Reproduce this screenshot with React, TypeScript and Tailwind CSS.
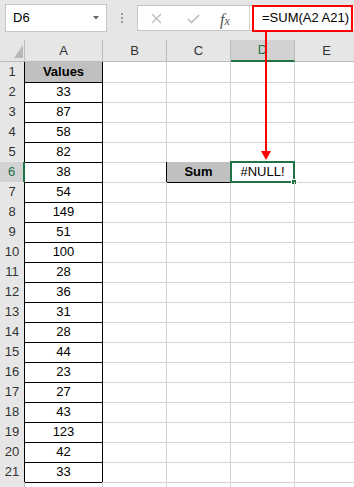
import React from "react";

const values = [33, 87, 58, 82, 38, 54, 149, 51, 100, 28, 36, 31, 28, 44, 23, 27, 43, 123, 42, 33];

const grid = "grid grid-cols-[25px_78px_64px_64px_64px_64px]";
const gl = "border-[#d4d4d4]";

function ColumnHeader({ label, active }: { label: string; active?: boolean }) {
  return (
    <div
      className={
        active
          ? "flex items-center justify-center bg-[#d2d2d2] border-r border-r-[#bcbcbc] border-b-2 border-b-[#217346] text-[#217346]"
          : "flex items-center justify-center border-r border-b border-[#bcbcbc] text-[#333]"
      }
    >
      {label}
    </div>
  );
}

function Row({ n }: { n: number }) {
  const inTable = n >= 1 && n <= 21;
  const value = n === 1 ? "Values" : inTable ? String(values[n - 2]) : "";
  const rowActive = n === 6;

  return (
    <div className={`${grid} h-[20px]`}>
      <div
        className={
          rowActive
            ? "flex items-center justify-center bg-[#d2d2d2] border-b border-b-[#c6c6c6] border-r-2 border-r-[#217346] text-[#217346]"
            : `flex items-center justify-center bg-[#e6e6e6] border-b border-b-[#c6c6c6] border-r ${inTable ? "border-r-black" : "border-r-[#bcbcbc]"} text-[#333]`
        }
      >
        {inTable ? n : ""}
      </div>
      <div
        className={
          inTable
            ? `flex items-center justify-center border-r border-b border-black ${n === 1 ? "bg-[#c0c0c0] font-bold" : ""}`
            : `border-r border-b ${gl}`
        }
      >
        {value}
      </div>
      <div className={`border-b ${gl} border-r ${n === 6 ? "border-r-black" : "border-r-[#d4d4d4]"}`} />
      <div
        className={
          n === 6
            ? "flex items-center justify-center bg-[#c0c0c0] font-bold border-r border-b border-black"
            : `border-r ${gl} border-b ${n === 5 ? "border-b-black" : "border-b-[#d4d4d4]"}`
        }
      >
        {n === 6 ? "Sum" : ""}
      </div>
      <div className={`relative flex items-center justify-center border-r border-b ${gl}`}>
        {n === 6 && (
          <>
            <span>#NULL!</span>
            <div className="absolute -left-[1px] -top-[1px] -right-[1px] -bottom-[1px] border-2 border-[#217346]" />
            <div className="absolute -right-[3px] -bottom-[3px] w-[6px] h-[6px] bg-[#217346] border border-white" />
          </>
        )}
      </div>
      <div className={`border-r border-b ${gl}`} />
    </div>
  );
}

export default function App() {
  const rows = Array.from({ length: 22 }, (_, i) => i + 1);

  return (
    <div className="relative w-[354px] h-[487px] overflow-hidden bg-white text-[13px] text-black font-['Liberation_Sans',Arial,sans-serif]">
      {/* toolbar */}
      <div className="h-[40px] bg-[#e6e6e6] relative">
        <div className="absolute left-[5px] top-[4px] w-[102px] h-[28px] bg-white border border-[#c6c6c6] flex items-center pl-[7px]">
          D6
          <svg className="absolute right-[7px] top-[11px]" width="6" height="4" viewBox="0 0 6 4">
            <polygon points="0,0 6,0 3,3.5" fill="#666" />
          </svg>
        </div>
        <div className="absolute left-[121px] top-[13px] flex flex-col gap-[2px]">
          <div className="w-[2px] h-[2px] bg-[#9a9a9a]" />
          <div className="w-[2px] h-[2px] bg-[#9a9a9a]" />
          <div className="w-[2px] h-[2px] bg-[#9a9a9a]" />
        </div>
        <div className="absolute left-[137px] top-[5px] w-[230px] h-[26px] bg-white border border-[#c6c6c6] flex">
          <div className="w-[112px] h-full border-r border-[#d4d4d4] relative">
            <svg className="absolute left-[13px] top-[7px]" width="11" height="11" viewBox="0 0 11 11">
              <path d="M1 1 L10 10 M10 1 L1 10" stroke="#bdbdbd" strokeWidth="1.4" />
            </svg>
            <svg className="absolute left-[49px] top-[8px]" width="13" height="10" viewBox="0 0 13 10">
              <path d="M1 5 L4.5 8.5 L12 1" stroke="#bdbdbd" strokeWidth="1.6" fill="none" />
            </svg>
            <span className="absolute left-[82px] top-[2px] text-[16px] italic text-[#555] font-['Liberation_Serif',serif]">
              f<span className="text-[12px]">x</span>
            </span>
          </div>
          <div className="flex items-center pl-[12px] text-[13px]">=SUM(A2 A21)</div>
        </div>
      </div>

      {/* column headers */}
      <div className={`${grid} h-[22px] bg-[#e6e6e6]`}>
        <div className="relative border-r border-b border-[#bcbcbc]">
          <svg className="absolute left-[14px] top-[5px]" width="9" height="13" viewBox="0 0 9 13">
            <polygon points="9,0 9,13 0,13" fill="#b8b8b8" />
          </svg>
        </div>
        <ColumnHeader label="A" />
        <ColumnHeader label="B" />
        <ColumnHeader label="C" />
        <ColumnHeader label="D" active />
        <ColumnHeader label="E" />
      </div>

      {rows.map((n) => (
        <Row key={n} n={n} />
      ))}

      {/* annotation */}
      <div className="absolute left-[252px] top-[5px] w-[101px] h-[27px] border-2 border-[#ff0000]" />
      <div className="absolute left-[265px] top-[32px] w-[2px] h-[121px] bg-[#ff0000]" />
      <svg className="absolute left-[261px] top-[151px]" width="10" height="9" viewBox="0 0 10 9">
        <polygon points="0,0 10,0 5,9" fill="#ff0000" />
      </svg>
    </div>
  );
}
